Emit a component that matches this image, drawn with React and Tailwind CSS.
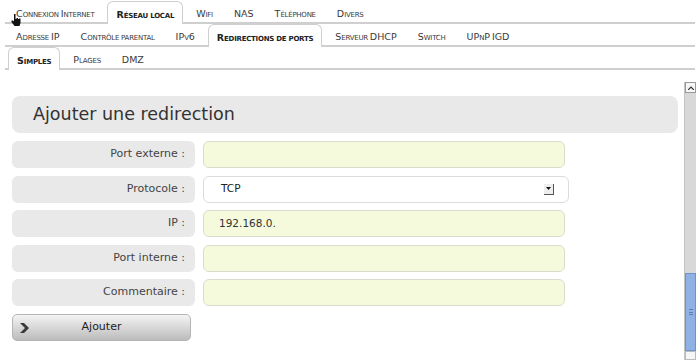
const font = { fontFamily: '"DejaVu Sans", Verdana, sans-serif' };

// small caps drawn by hand: capitals stay big, lowercase become small capitals
const SmallCaps = ({ text }) => {
  const runs = [];
  for (const ch of text) {
    const small = ch === " " || ch !== ch.toUpperCase();
    const last = runs[runs.length - 1];
    if (last && last.small === small) last.text += ch;
    else runs.push({ small, text: ch });
  }
  return runs.map((r, i) =>
    r.small ? (
      <span key={i} className="text-[7px] tracking-[-0.25px] whitespace-pre">{r.text.toUpperCase()}</span>
    ) : (
      <span key={i} className="text-[9.5px] whitespace-pre">{r.text}</span>
    )
  );
};

const Tab = ({ label, active }) => (
  <div
    className={
      active
        ? "px-2 flex items-center bg-white border border-[#cfcfcf] border-b-0 rounded-t-[6px] -mb-[2px] h-[23px] font-bold text-[#222]"
        : "px-2 h-[21px] flex items-center text-[#3a3a3a]"
    }
  >
    <span className="leading-none">
      <SmallCaps text={label} />
    </span>
  </div>
);

const TabRow = ({ tabs, active }) => (
  <div className="mx-[5px] h-[23px] border-b-2 border-[#cfcfcf] flex items-end gap-[5px] pl-[3px]">
    {tabs.map((t) => (
      <Tab key={t} label={t} active={t === active} />
    ))}
  </div>
);

const FieldRow = ({ label, children }) => (
  <div className="flex gap-[8px] h-[27px]">
    <div className="w-[183px] bg-[#e9e9e9] rounded-[6px] flex items-center justify-end pr-[10px] text-[11px] text-[#444]">
      {label}
    </div>
    {children}
  </div>
);

const Input = ({ value }) => (
  <div className="w-[362px] bg-[#f5fadd] border border-[#d9dccd] rounded-[6px] flex items-center pl-[15px] text-[10.5px] text-[#333]">
    {value}
  </div>
);

export default function App() {
  return (
    <div className="w-[700px] h-[360px] bg-white relative overflow-hidden pt-[1px]" style={font}>
      <TabRow
        tabs={["Connexion Internet", "Réseau local", "Wifi", "NAS", "Téléphone", "Divers"]}
        active="Réseau local"
      />
      <TabRow
        tabs={["Adresse IP", "Contrôle parental", "IPv6", "Redirections de ports", "Serveur DHCP", "Switch", "UPnP IGD"]}
        active="Redirections de ports"
      />
      <TabRow tabs={["Simples", "Plages", "DMZ"]} active="Simples" />

      {/* frame with scrollbar */}
      <div className="flex mt-[12px] h-[278px]">
        <div className="flex-1 pl-[12px] pr-[6px] pt-[14px] flex flex-col">
          <div className="h-[37px] bg-[#e9e9e9] rounded-[8px] flex items-center pl-[21px] text-[17.5px] text-[#333]">
            Ajouter une redirection
          </div>
          <div className="flex flex-col gap-[7.5px] mt-[8px]">
            <FieldRow label="Port externe :">
              <Input />
            </FieldRow>
            <FieldRow label="Protocole :">
              <div className="w-[366px] bg-white border border-[#dcdcdc] rounded-[6px] flex items-center pl-[17px] pr-[14px] text-[10.5px] text-[#222]">
                <span className="flex-1">TCP</span>
                <div className="w-[10px] h-[11px] bg-[#eeeeee] border-r border-b border-[#555] flex items-center justify-center">
                  <svg width="5" height="3" viewBox="0 0 5 3">
                    <path d="M0 0h5L2.5 3z" fill="#111" />
                  </svg>
                </div>
              </div>
            </FieldRow>
            <FieldRow label="IP :">
              <Input value="192.168.0." />
            </FieldRow>
            <FieldRow label="Port interne :">
              <Input />
            </FieldRow>
            <FieldRow label="Commentaire :">
              <Input />
            </FieldRow>
          </div>
          <button className="mt-[8px] w-[179px] h-[27px] rounded-[5px] border border-[#b5b5b5] bg-gradient-to-b from-[#f4f4f4] to-[#bcbcbc] flex items-center text-[11px] text-[#222] relative">
            <svg className="absolute left-[7px] top-[8px]" width="10" height="10" viewBox="0 0 10 10">
              <path d="M0 0h4l5 5-5 5H0l5-5z" fill="#3a3a3a" />
            </svg>
            <span className="w-full text-center">Ajouter</span>
          </button>
        </div>

        {/* scrollbar */}
        <div className="w-[12px] mr-[4px] bg-[#d8d8d8] border-l border-[#c4c4c4] flex flex-col">
          <div className="h-[11px] bg-[#f6f6f6] border border-[#9a9a9a] flex items-center justify-center">
            <svg width="6" height="4" viewBox="0 0 6 4">
              <path d="M0 4l3-3 3 3" stroke="#333" fill="none" strokeWidth="1.2" />
            </svg>
          </div>
          <div className="flex-1" />
          <div className="h-[78px] bg-[#8fb1e3] border border-[#6f93c9] flex items-center justify-center">
            <div className="w-[4px] h-[6px] border-y border-[#5b7fb5] flex items-center">
              <div className="w-full h-px bg-[#5b7fb5]" />
            </div>
          </div>
          <div className="h-[9px] bg-[#f6f6f6] border border-[#bbb]" />
        </div>
      </div>

      {/* mouse pointer */}
      <svg className="absolute left-[11px] top-[14px]" width="10" height="12" viewBox="0 0 10 12">
        <path d="M3 0h1.5v5h1v-1h1.5v1h1v-0.5h1.5v4.5l-1 3h-5l-3-4v-1.5h1.5l1 1z" fill="#111" />
      </svg>
    </div>
  );
}
